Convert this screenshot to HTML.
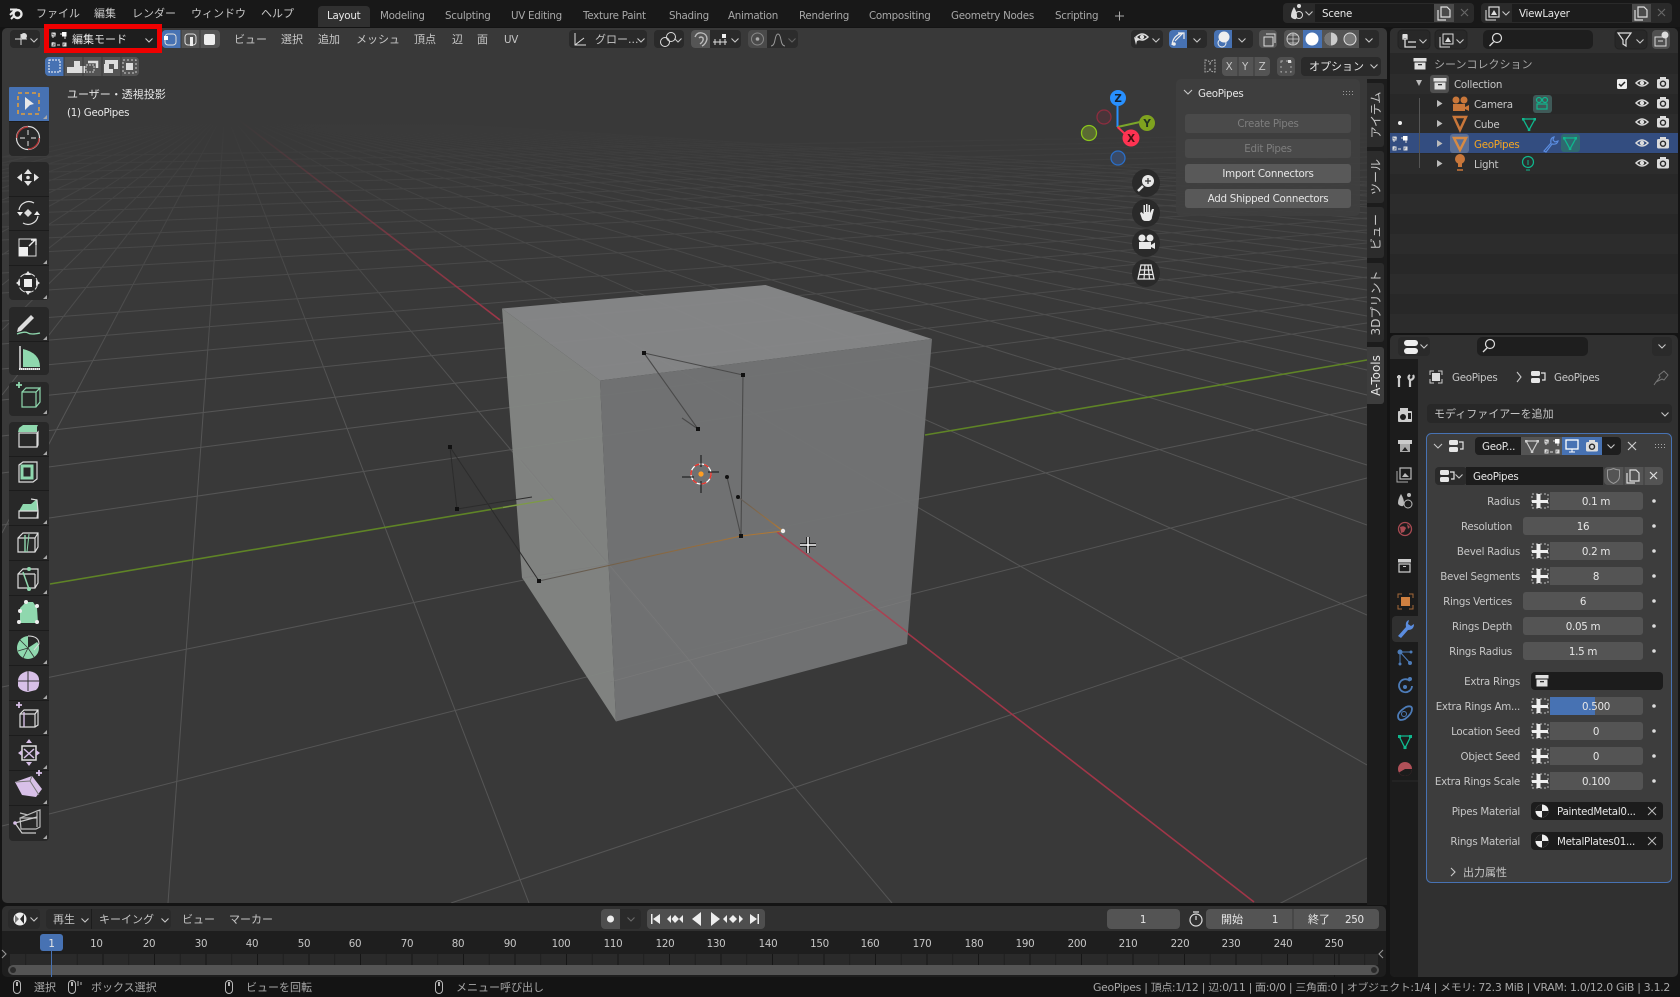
<!DOCTYPE html>
<html lang="ja"><head><meta charset="utf-8"><title>Blender</title>
<style>
html,body{margin:0;padding:0;background:#141414;width:1680px;height:997px;overflow:hidden}
svg{display:block}
text{font-family:"DejaVu Sans","Noto Sans CJK JP",sans-serif;font-size:10.3px;letter-spacing:-.28px;fill:#c6c6c6}
.w{fill:#e6e6e6}.d{fill:#a8a8a8}.m{text-anchor:middle}.e{text-anchor:end}
.j{font-size:11px;letter-spacing:0}.dis{fill:#7e7e7e}
.tb{font-size:12px;letter-spacing:0}
.ic{fill:none;stroke:#d6d6d6;stroke-width:1.3}
.chev{fill:none;stroke:#c8c8c8;stroke-width:1.1}
</style></head><body>
<svg width="1680" height="997" viewBox="0 0 1680 997" xmlns="http://www.w3.org/2000/svg">
<defs>
<linearGradient id="gf" gradientUnits="userSpaceOnUse" x1="0" y1="122" x2="0" y2="400"><stop offset="0" stop-color="#505050" stop-opacity="0"/><stop offset=".25" stop-color="#505050" stop-opacity=".45"/><stop offset="1" stop-color="#555555"/></linearGradient>
<linearGradient id="rf" gradientUnits="userSpaceOnUse" x1="239" y1="120" x2="500" y2="320"><stop offset="0" stop-color="#a03648" stop-opacity="0"/><stop offset="1" stop-color="#a03648"/></linearGradient>
<linearGradient id="or" gradientUnits="userSpaceOnUse" x1="539" y1="581" x2="783" y2="531"><stop offset="0" stop-color="#555"/><stop offset="1" stop-color="#b87a30"/></linearGradient>
<linearGradient id="or2" gradientUnits="userSpaceOnUse" x1="738" y1="497" x2="783" y2="531"><stop offset="0" stop-color="#5a5a5a"/><stop offset="1" stop-color="#b87a30"/></linearGradient>
<clipPath id="vp"><rect x="2" y="28" width="1365" height="875"/></clipPath>
<g id="chv"><path d="M-3.5-1.5L0 2L3.5-1.5" class="chev"/></g>
<g id="eye"><path d="M-6 0Q0-6 6 0Q0 6-6 0Z" fill="none" stroke="#dcdcdc" stroke-width="1.5"/><circle r="2.2" fill="#dcdcdc"/></g>
<g id="rc"><rect x="-6" y="-4" width="12" height="9.5" rx="1.5" fill="#dcdcdc"/><rect x="-3" y="-6" width="6" height="2" fill="#dcdcdc"/><circle cy=".7" r="3.2" fill="#2a2a2a"/><circle cy=".7" r="1.8" fill="#dcdcdc"/></g>
<g id="tg"><rect x="-8" y="-7" width="16" height="14" fill="none" stroke="#bbb" stroke-dasharray="2 2"/><rect x="-3.5" y="-7" width="4" height="14" fill="#eee"/><rect x="-8" y="-1" width="16" height="3" fill="#eee"/></g>
<g id="mod"><rect x="-7" y="-6" width="9" height="5" rx="1.5" fill="#e6e6e6"/><rect x="-7" y="1" width="9" height="5" rx="1.5" fill="#e6e6e6"/><path d="M3-4H7V3H4" fill="none" stroke="#e6e6e6" stroke-width="1.2"/></g>
<g id="tri"><path d="M-6-5H6L0 6Z" fill="none" stroke="#0fb88e" stroke-width="1.3"/><g fill="#0fb88e"><rect x="-7" y="-6" width="2.5" height="2.5"/><rect x="4.5" y="-6" width="2.5" height="2.5"/><rect x="-1.2" y="4.5" width="2.5" height="2.5"/></g></g>
<g id="triw"><path d="M-6-5H6L0 6Z" fill="none" stroke="#ccc" stroke-width="1.2"/><g fill="#ccc"><rect x="-7" y="-6" width="2.5" height="2.5"/><rect x="4.5" y="-6" width="2.5" height="2.5"/><rect x="-1.2" y="4.5" width="2.5" height="2.5"/></g></g>
<g id="mode"><rect x="-6" y="-5" width="12" height="11" fill="none" stroke="#ddd" stroke-dasharray="3 4"/><rect x="3" y="-7" width="4.5" height="4.5" fill="#fff"/><g fill="none" stroke="#ddd"><rect x="-7" y="-6" width="3" height="3"/><rect x="-7" y="4" width="3" height="3"/><rect x="4" y="4" width="3" height="3"/></g></g>
<g id="sph"><circle r="6.5" fill="#f0f0f0"/><path d="M0 0H-6.500A6.500 6.500 0 0 1 0-6.500ZM0 0H6.500A6.500 6.500 0 0 1 0 6.500Z" fill="#222"/></g>
<g id="coll"><rect x="-6.5" y="-6" width="13" height="3.5" fill="#e0e0e0"/><path d="M-5.500-1.500H5.500V5.500H-5.500Z" fill="#e0e0e0"/><rect x="-2" y="0" width="4" height="1.3" fill="#333"/></g>
<g id="mouse"><rect x="-3.5" y="-6.5" width="7" height="13" rx="3.5" fill="none" stroke="#b8b8b8"/><rect x="-1" y="-5" width="2" height="4" fill="#b8b8b8"/></g>
<pattern id="tk" patternUnits="userSpaceOnUse" width="51.500" height="12" x="51"><rect width="51.500" height="12" fill="#2a2a2a"/><rect x="0" width="1" height="12" fill="#161616"/><rect x="25.700" width="1" height="12" fill="#1f1f1f"/></pattern>
</defs>

<rect width="1680" height="997" fill="#141414"/>
<rect width="1680" height="27" fill="#181818"/>

<!-- viewport -->
<rect x="2" y="28" width="1385" height="875" rx="5" fill="#393939"/>
<g clip-path="url(#vp)">
<path fill="none" stroke="url(#gf)" d="M225 110L892 903M225 110L529 903M225 110L168 903M225 110L2 533M225 110L2 395M225 110L2 330M225 110L2 285M225 110L2 255M225 110L2 232M225 110L2 215M225 110L2 200M225 110L2 188M225 110L2 178M225 110L2 170M225 110L2 163M225 110L2 157M225 110L1367 765M225 110L1367 615M225 110L1367 525M225 110L1367 465M225 110L1367 425M225 110L1367 395M225 110L1367 370M225 110L1367 350M225 110L1367 332M225 110L1367 316M225 110L1367 302M225 110L1367 290M225 110L1367 278M225 110L1367 268M225 110L1367 258M225 110L1367 249M225 110L1367 241M225 110L1367 233M225 110L1367 226M225 110L1367 219M225 110L1367 213M225 110L1367 207M225 110L1367 201M225 110L1367 196M225 110L1367 191M225 110L1367 186M225 110L1367 182M2 687L1367 407M2 826L1367 478M451 903L1367 595M1279 904L1367 858M2 525L1367 323M2 473L1367 297M2 436L1367 277M2 400L1367 259M2 369L1367 243M2 344L1367 230M2 321L1367 218M2 293L1367 204M2 273L1367 194M2 254L1367 184M2 240L1367 177M2 227L1367 170M2 214L1367 163M2 202L1367 157M2 191L1367 152M2 181L1367 147M2 173L1367 142M2 165L1367 138M2 157L1367 134"/>
<path d="M239 120L500 320" stroke="url(#rf)" stroke-width="1.600"/>
<path d="M777 532L1254 902" stroke="#a03648" stroke-width="1.600"/>
<path d="M50 584L553 499M925 435L1367 360" stroke="#5f8426" stroke-width="1.600" fill="none"/>
<!-- cube -->
<g opacity=".96">
<path d="M502 308.500L765.500 285L932 339L600 380.500Z" fill="#878889"/>
<path d="M502 308.500L600 380.500L616 721.500L522 577.500Z" fill="#838683"/>
<path d="M600 380.500L932 339L907 644L616 721.500Z" fill="#737475"/>
</g>
<path d="M521 460L685 655L720 698M522 578L610 564M610 682L909 600" stroke="#7c7c7c" stroke-width=".8" fill="none" opacity=".7"/>
<path d="M777 532L907 632" stroke="#a84252" stroke-width="1.600"/>
<path d="M503 507.500L553 499" stroke="#7d9a45" stroke-width="1.300"/>
<!-- mesh -->
<path d="M644 353L743 375M644 353L698 429L682 418M743 375L741 536M727 477L741 536" fill="none" stroke="#4a4a4a" stroke-width="1.100"/>
<path d="M539 581L450 447L457 509L532 497" fill="none" stroke="#2c2c2c" stroke-width="1"/>
<path d="M539 581L741 536L783 531" stroke="url(#or)" stroke-width="1.100" fill="none"/>
<path d="M738 497L783 531" stroke="url(#or2)" stroke-width="1.100"/>
<g fill="#111"><rect x="642" y="351" width="4" height="4"/><rect x="741" y="373" width="4" height="4"/><rect x="696" y="427" width="4" height="4"/><circle cx="727" cy="477" r="2"/><circle cx="738" cy="497" r="2"/><rect x="739" y="534" width="4" height="4"/><rect x="537" y="579" width="4" height="4"/><rect x="448" y="445" width="4" height="4"/><rect x="455" y="507" width="4" height="4"/></g>
<circle cx="783" cy="531" r="2.200" fill="#eee"/>
<circle cx="701" cy="474" r="10" fill="none" stroke="#fff" stroke-width="1.300"/>
<circle cx="701" cy="474" r="10" fill="none" stroke="#e8342c" stroke-width="1.400" stroke-dasharray="5 5"/>
<path d="M701 455V467M701 481V493M682 477H694M708 472H719" stroke="#111"/>
<circle cx="701" cy="474" r="2.600" fill="#ff9e22"/>
<path d="M808 537V553M800 545H816" stroke="#111" stroke-width="3.500"/>
<path d="M808 537V553M800 545H816" stroke="#fff" stroke-width="1.500"/>
</g>

<text x="67" y="98" class="w j">ユーザー・透視投影</text>
<text x="67" y="116" class="w">(1) GeoPipes</text>

<!-- N tabs column -->
<rect x="1367" y="79" width="20" height="826" fill="#1c1c1c"/>
<g fill="#2c2c2c"><path d="M1367 83h14a3 3 0 0 1 3 3v58a3 3 0 0 1-3 3h-14z"/><path d="M1367 151h14a3 3 0 0 1 3 3v46a3 3 0 0 1-3 3h-14z"/><path d="M1367 207h14a3 3 0 0 1 3 3v45a3 3 0 0 1-3 3h-14z"/><path d="M1367 263h14a3 3 0 0 1 3 3v73a3 3 0 0 1-3 3h-14z"/><path d="M1367 347h14a3 3 0 0 1 3 3v51a3 3 0 0 1-3 3h-14z" fill="#3d3d3d"/></g>
<text class="m tb" transform="translate(1380 115) rotate(-90)">アイテム</text>
<text class="m tb" transform="translate(1380 177) rotate(-90)">ツール</text>
<text class="m tb" transform="translate(1380 232) rotate(-90)">ビュー</text>
<text class="m tb" transform="translate(1380 303) rotate(-90)">3Dプリント</text>
<text class="m w tb" transform="translate(1380 375.500) rotate(-90)">A-Tools</text>

<!-- N panel -->
<rect x="1176" y="79" width="184" height="137" rx="5" fill="#3f3f3f" fill-opacity=".92"/>
<path d="M1184 90l4 4l4-4" class="chev"/>
<text x="1198" y="97" class="w">GeoPipes</text>
<g fill="#999"><rect x="1343" y="91" width="1" height="1"/><rect x="1346" y="91" width="1" height="1"/><rect x="1349" y="91" width="1" height="1"/><rect x="1352" y="91" width="1" height="1"/><rect x="1343" y="94" width="1" height="1"/><rect x="1346" y="94" width="1" height="1"/><rect x="1349" y="94" width="1" height="1"/><rect x="1352" y="94" width="1" height="1"/></g>
<rect x="1185" y="114" width="166" height="19" rx="3" fill="#4a4a4a"/><text x="1268" y="127" class="m dis">Create Pipes</text>
<rect x="1185" y="139" width="166" height="19" rx="3" fill="#4a4a4a"/><text x="1268" y="152" class="m dis">Edit Pipes</text>
<rect x="1185" y="164" width="166" height="19" rx="3" fill="#595959"/><text x="1268" y="177" class="m w">Import Connectors</text>
<rect x="1185" y="189" width="166" height="19" rx="3" fill="#595959"/><text x="1268" y="202" class="m w">Add Shipped Connectors</text>

<!-- gizmo -->
<path d="M1117.500 127V106" stroke="#2890ff" stroke-width="2"/><path d="M1117.500 127L1140 122" stroke="#7ba62a" stroke-width="2"/><path d="M1117.500 127L1125 134" stroke="#ff3352" stroke-width="2"/>
<circle cx="1104" cy="117" r="7" fill="#4a3439" stroke="#8d2d3f" stroke-width="1.300"/>
<circle cx="1089" cy="133" r="7.500" fill="#5a6a33" stroke="#8bc61c" stroke-width="1.300"/>
<circle cx="1118" cy="158" r="7" fill="#3a4a66" stroke="#2a6fc9" stroke-width="1.300"/>
<circle cx="1118" cy="98" r="8" fill="#2890ff"/><text x="1118" y="102" class="m" style="fill:#123;font-weight:bold">Z</text>
<circle cx="1147" cy="123" r="8" fill="#7fa31f"/><text x="1147" y="127" class="m" style="fill:#232;font-weight:bold">Y</text>
<circle cx="1131" cy="138" r="8.500" fill="#ff3352"/><text x="1131" y="142" class="m" style="fill:#411;font-weight:bold">X</text>
<g fill="#2a2a2a"><circle cx="1146" cy="183" r="14"/><circle cx="1146" cy="213" r="14"/><circle cx="1146" cy="243" r="14"/><circle cx="1146" cy="273" r="14"/></g>
<circle cx="1148" cy="181" r="6" fill="#e8e8e8"/><path d="M1145 181h6M1148 178v6" stroke="#333" stroke-width="1.200"/><path d="M1143 186l-5 5" stroke="#e8e8e8" stroke-width="2.500"/>
<path d="M1140 213l2 6q1 2 4 2h3q3-1 3-4l2-8h-2l-2 4v-8h-1.500v7h-1v-8h-1.500v8h-1v-7h-1.500v9l-2-2z" fill="#e8e8e8"/>
<circle cx="1142" cy="238" r="3.500" fill="#e8e8e8"/><circle cx="1150" cy="238" r="3.500" fill="#e8e8e8"/><rect x="1139" y="242" width="12" height="7" fill="#e8e8e8"/><path d="M1151 245l4-2.500v6.500l-4-2z" fill="#e8e8e8"/>
<path d="M1141 265h10l3 14h-16zM1145 265l-1 14M1148 265l1.500 14M1139.500 270h13M1138.500 274.500h15" fill="none" stroke="#e8e8e8" stroke-width="1.200"/>

<!-- top bar -->
<g transform="translate(16 14)"><circle cx="1.500" cy="0" r="4" fill="none" stroke="#e8e8e8" stroke-width="2.400"/><path d="M-6-4.500L1-4.500M-6 1L-2-3M-5 5L-2 2" stroke="#e8e8e8" stroke-width="2"/></g>
<text x="36" y="17" class="j">ファイル</text><text x="94" y="17" class="j">編集</text><text x="132" y="17" class="j">レンダー</text><text x="191" y="17" class="j">ウィンドウ</text><text x="261" y="17" class="j">ヘルプ</text>
<path d="M318 27V10a4 4 0 0 1 4-4h44a4 4 0 0 1 4 4v17z" fill="#303030"/>
<text x="327" y="19" class="w">Layout</text>
<text x="380" y="19" class="d">Modeling</text><text x="445" y="19" class="d">Sculpting</text><text x="511" y="19" class="d">UV Editing</text><text x="583" y="19" class="d">Texture Paint</text><text x="669" y="19" class="d">Shading</text><text x="728" y="19" class="d">Animation</text><text x="799" y="19" class="d">Rendering</text><text x="869" y="19" class="d">Compositing</text><text x="951" y="19" class="d">Geometry Nodes</text><text x="1055" y="19" class="d">Scripting</text>
<path d="M1115 16h9M1119.500 11.500v9" stroke="#aaa"/>

<g transform="translate(0 -1)">
<rect x="1283" y="4" width="191" height="20" rx="4" fill="#2a2a2a"/>
<rect x="1315" y="5" width="119" height="18" fill="#1c1c1c"/><rect x="1434" y="5" width="20" height="18" fill="#4a4a4a"/>
<path d="M1291 17q0-4 3-9q3 5 3 9t-3 3t-3-3z" fill="#ddd"/><circle cx="1299" cy="7" r="2" fill="#ddd"/><circle cx="1299" cy="16" r="3.500" fill="none" stroke="#ddd"/><use href="#chv" x="1309" y="14"/>
<text x="1322" y="18" class="w">Scene</text>
<path d="M1441 8h6l3 3v7h-9zM1438 11v10h8" fill="none" stroke="#ddd" stroke-width="1.200"/>
<path d="M1461 10l7 7M1468 10l-7 7" stroke="#666" stroke-width="1.200"/>
<rect x="1481" y="4" width="191" height="20" rx="4" fill="#2a2a2a"/>
<rect x="1512" y="5" width="120" height="18" fill="#1c1c1c"/><rect x="1632" y="5" width="19" height="18" fill="#4a4a4a"/>
<rect x="1489" y="8" width="10" height="10" fill="none" stroke="#ddd" stroke-width="1.200"/><path d="M1491 16l3-5l3 5z" fill="#ddd"/><path d="M1486 11v10h10" fill="none" stroke="#ddd"/><use href="#chv" x="1506" y="14"/>
<text x="1519" y="18" class="w">ViewLayer</text>
<path d="M1638 8h6l3 3v7h-9zM1635 11v10h8" fill="none" stroke="#ddd" stroke-width="1.200"/>
<path d="M1658 10l7 7M1665 10l-7 7" stroke="#666" stroke-width="1.200"/>
</g>

<!-- viewport header left -->
<rect x="10" y="30" width="30" height="18" rx="4" fill="#2a2a2a"/>
<path d="M15 39h12M21 34v11" stroke="#ddd"/><circle cx="24" cy="36" r="3" fill="#ddd"/><use href="#chv" x="34" y="40"/>
<rect x="46.500" y="26.500" width="113" height="24" fill="#1e1e1e" stroke="#f00000" stroke-width="5"/>
<rect x="49" y="30" width="107" height="18" rx="2" fill="#1e1e1e"/>
<use href="#mode" x="59" y="39"/><text x="72" y="43" class="w j">編集モード</text><use href="#chv" x="149" y="40"/>
<rect x="162" y="30" width="58" height="18" rx="4" fill="#545454"/><path d="M166 30h15v18h-15a4 4 0 0 1-4-4v-10a4 4 0 0 1 4-4z" fill="#4772b3"/>
<rect x="165" y="34" width="11" height="11" rx="3" fill="none" stroke="#ddd"/><rect x="164" y="36" width="4" height="4" fill="#fff"/>
<rect x="185" y="34" width="11" height="11" rx="3" fill="none" stroke="#ddd"/><rect x="190" y="37" width="3" height="9" fill="#eee"/>
<rect x="204" y="34" width="11" height="11" rx="2" fill="#eee"/>
<path d="M181 30v18M200 30v18" stroke="#3a3a3a"/>
<text x="234" y="43" class="j">ビュー</text><text x="281" y="43" class="j">選択</text><text x="318" y="43" class="j">追加</text><text x="356" y="43" class="j">メッシュ</text><text x="414" y="43" class="j">頂点</text><text x="452" y="43" class="j">辺</text><text x="477" y="43" class="j">面</text><text x="504" y="43">UV</text>
<rect x="45" y="57" width="94" height="19" rx="4" fill="#545454"/><path d="M49 57h15v19h-15a4 4 0 0 1-4-4v-11a4 4 0 0 1 4-4z" fill="#4772b3"/>
<rect x="49" y="60" width="11" height="12" fill="none" stroke="#fff" stroke-dasharray="2 1"/>
<path d="M74 61h6v5h5v7H67v-6h7z" fill="#ddd"/>
<path d="M88 62h9v6" fill="none" stroke="#ddd" stroke-width="2.500"/><rect x="86" y="65" width="8" height="7" fill="none" stroke="#ccc" stroke-dasharray="2 1"/>
<path d="M105 60h13v9h-5v4h-9v-9h1z" fill="#ddd"/><rect x="109" y="64" width="5" height="5" fill="#555"/>
<rect x="123" y="60" width="13" height="13" fill="none" stroke="#ccc" stroke-dasharray="2 2"/><rect x="126" y="63" width="7" height="7" fill="#ddd"/>
<path d="M64 57v19M83 57v19M102 57v19M121 57v19" stroke="#3a3a3a"/>

<!-- header middle -->
<rect x="569" y="30" width="78" height="18" rx="4" fill="#2a2a2a"/>
<path d="M575 33v12h11M575 45l9-7" fill="none" stroke="#ddd"/><text x="595" y="43" class="j">グロー...</text><use href="#chv" x="641" y="40"/>
<rect x="654" y="30" width="30" height="18" rx="4" fill="#2a2a2a"/>
<circle cx="665" cy="42" r="4.500" fill="none" stroke="#ddd"/><circle cx="671" cy="37" r="4.500" fill="none" stroke="#ddd"/><use href="#chv" x="678" y="40"/>
<rect x="691" y="30" width="50" height="18" rx="4" fill="#2a2a2a"/><path d="M695 30h15v18h-15a4 4 0 0 1-4-4v-10a4 4 0 0 1 4-4z" fill="#555"/>
<path d="M695 37q2-5 7-4t5 6q-1 5-5 7M699 38q2-2 4 0q1 3-3 6" fill="none" stroke="#bbb" stroke-width="1.400"/>
<path d="M713 42h14M715 39v6M720 39v6M725 39v6" stroke="#ddd"/><rect x="722" y="34" width="4" height="4" fill="#eee"/><use href="#chv" x="735" y="40"/>
<rect x="748" y="30" width="50" height="18" rx="4" fill="#2c2c2c"/><path d="M752 30h15v18h-15a4 4 0 0 1-4-4v-10a4 4 0 0 1 4-4z" fill="#4a4a4a"/>
<circle cx="757.500" cy="39" r="6" fill="none" stroke="#888"/><circle cx="757.500" cy="39" r="1.800" fill="#aaa"/>
<path d="M771 46q3 0 4-6t3-6t3 6t4 6" fill="none" stroke="#999"/><use href="#chv" x="792" y="40" opacity=".35"/>

<!-- header right -->
<rect x="1131" y="30" width="32" height="18" rx="4" fill="#2a2a2a"/><use href="#eye" x="1142" y="37"/><path d="M1134 37l6 3l-3 1l-1 4z" fill="#ddd"/><use href="#chv" x="1156" y="40"/>
<rect x="1169" y="30" width="38" height="18" rx="4" fill="#2a2a2a"/><path d="M1173 30h14v18h-14a4 4 0 0 1-4-4v-10a4 4 0 0 1 4-4z" fill="#4772b3"/><path d="M1172 45q1-10 11-12M1178 33h6v6M1175 41l8-8" fill="none" stroke="#eee" stroke-width="1.200"/><circle cx="1174" cy="44" r="1.800" fill="#eee"/><use href="#chv" x="1197" y="40"/>
<rect x="1214" y="30" width="39" height="18" rx="4" fill="#2a2a2a"/><path d="M1218 30h14v18h-14a4 4 0 0 1-4-4v-10a4 4 0 0 1 4-4z" fill="#4772b3"/><circle cx="1224" cy="37" r="5.500" fill="#eee"/><circle cx="1222" cy="43" r="4" fill="none" stroke="#eee"/><use href="#chv" x="1242" y="40"/>
<rect x="1259" y="30" width="18" height="18" rx="4" fill="#545454"/><rect x="1264" y="37" width="9" height="9" fill="none" stroke="#ddd"/><path d="M1266 34h9v9" fill="none" stroke="#ddd"/>
<rect x="1284" y="30" width="95" height="18" rx="4" fill="#2a2a2a"/><path d="M1288 30h15v18h-15a4 4 0 0 1-4-4v-10a4 4 0 0 1 4-4z" fill="#545454"/><rect x="1322" y="30" width="37" height="18" fill="#545454"/><rect x="1303" y="30" width="19" height="18" fill="#4772b3"/>
<circle cx="1293" cy="39" r="6" fill="none" stroke="#ccc"/><path d="M1287 39h12M1293 33v12M1289 35h8M1289 43h8" stroke="#ccc" stroke-width=".8"/>
<circle cx="1312" cy="39" r="6.500" fill="#fff"/>
<circle cx="1331" cy="39" r="6.500" fill="#ccc"/><path d="M1331 32.500a6.500 6.500 0 0 0 0 13z" fill="#777"/>
<circle cx="1350" cy="39" r="6" fill="#777" stroke="#ddd"/>
<use href="#chv" x="1369" y="40"/>
<path d="M1205 60q5 0 5 5q0-5 5-5v12q-5 0-5-4q0 4-5 4z" fill="none" stroke="#aaa" stroke-dasharray="2 1"/>
<rect x="1222" y="57" width="48" height="19" rx="4" fill="#545454"/><path d="M1238 57v19M1254 57v19" stroke="#3a3a3a"/>
<text x="1229" y="70" class="m">X</text><text x="1245" y="70" class="m">Y</text><text x="1262" y="70" class="m">Z</text>
<rect x="1277" y="57" width="18" height="19" rx="4" fill="#505050"/><rect x="1281" y="61" width="10" height="11" fill="none" stroke="#aaa" stroke-dasharray="2 3"/><rect x="1288" y="60" width="3" height="3" fill="#ddd"/>
<rect x="1301" y="57" width="80" height="19" rx="4" fill="#2a2a2a"/><text x="1309" y="70" class="w j">オプション</text><use href="#chv" x="1374" y="66"/>

<!-- toolbar -->
<g fill="#282828">
<rect x="9" y="87" width="40" height="69" rx="4"/><rect x="9" y="162" width="40" height="138" rx="4"/><rect x="9" y="307" width="40" height="68" rx="4"/><rect x="9" y="382" width="40" height="34" rx="4"/><rect x="9" y="422" width="40" height="419" rx="4"/>
</g>
<path d="M9 88a1 1 0 0 1 1-1h38a1 1 0 0 1 1 1v33H9z" fill="#4772b3"/>
<path fill="none" stroke="#1c1c1c" d="M9 121.500h40M9 196.500h40M9 230.500h40M9 265.500h40M9 341.500h40M9 456.500h40M9 490.500h40M9 525.500h40M9 560.500h40M9 595.500h40M9 630.500h40M9 665.500h40M9 700.500h40M9 735.500h40M9 770.500h40M9 805.500h40"/>
<rect x="18" y="93" width="21" height="21" fill="none" stroke="#ffa726" stroke-width="1.300" stroke-dasharray="4 3"/><path d="M25 97l9 7l-4 1l-5 5z" fill="#e8e8e8"/>
<circle cx="28" cy="138" r="11.500" fill="none" stroke="#ddd" stroke-width="1.200"/><path d="M17 138a11 11 0 0 1 11-11" fill="none" stroke="#a33" stroke-width="1.400"/><path d="M39 138a11 11 0 0 1-11 11" fill="none" stroke="#a33" stroke-width="1.400"/><path d="M28 130v5M28 141v5M20 138h5M31 138h5" stroke="#aaa" stroke-width="1.400"/>
<g fill="#e4e4e4"><path d="M28 169l-4 5h8zM28 186l-4-5h8zM17 177.500l5-4v8zM39 177.500l-5-4v8z"/><circle cx="28" cy="177.500" r="1.800"/></g>
<g fill="none" stroke="#ddd" stroke-width="1.200"><path d="M19 210a10 10 0 0 1 15-7M38 216a10 10 0 0 1-15 7"/></g><path d="M28 209l4 4l-4 4l-4-4z" fill="#ddd"/><path d="M17 212h6l-3 4zM34 215h6l-3-4z" fill="#eee"/>
<rect x="19" y="239" width="17" height="17" fill="none" stroke="#ddd"/><rect x="19" y="247" width="9" height="9" fill="#eee"/><path d="M29 246l6-6M31 240h5v5" fill="none" stroke="#eee" stroke-width="1.400"/>
<circle cx="28" cy="283" r="9.500" fill="none" stroke="#ddd" stroke-dasharray="7 2"/><rect x="24" y="279" width="8" height="8" fill="#eee"/><g fill="#e4e4e4"><path d="M28 271l-3 4h6zM28 295l-3-4h6zM16 283l4-3v6zM40 283l-4-3v6z"/></g>
<path d="M18 328l13-13l3 3l-13 13l-4 1z" fill="#ddd"/><path d="M17 334q8-3 11-1t12 0" fill="none" stroke="#8fd8ae" stroke-width="1.300"/>
<path d="M20 346v23h20" fill="none" stroke="#ddd" stroke-width="1.500"/><path d="M23 349v18h17q0-14-17-18z" fill="#8fd8ae"/><path d="M19 369h22" stroke="#eee" stroke-width="2" stroke-dasharray="1 1"/>
<path d="M22 392h14l4-4v14l-4 5H22zM22 392l4-4h14M36 392v15" fill="none" stroke="#8fd8ae" stroke-width="1.200"/><path d="M16 385h6M19 382v6" stroke="#8fd8ae" stroke-width="1.800"/>
<path d="M19 428l4-3h15l-1 2v5H18z" fill="#8fd8ae"/><path d="M19 433h18v14H19zM37 433l1-1v13l-1 2" fill="none" stroke="#ddd" stroke-width="1.200"/>
<path d="M19 465l4-3h14v17l-4 3H19z" fill="none" stroke="#ddd" stroke-width="1.200"/><rect x="22" y="466" width="10" height="12" fill="none" stroke="#8fd8ae" stroke-width="3"/>
<path d="M19 511l4-7h8l6-5l1 12z" fill="#8fd8ae"/><path d="M19 511h19v7H19zM38 511l-1 7M31 499l6 1l1 11" fill="none" stroke="#ddd" stroke-width="1.200"/>
<path d="M18 538l5-5h15v14l-3 5H18zM35 538v14M18 538h17M38 533l-3 5" fill="none" stroke="#ddd" stroke-width="1.200"/><path d="M25 535v17" stroke="#8fd8ae" stroke-width="1.400"/><path d="M29 534l-2 18" stroke="#8fd8ae" stroke-width="1"/>
<path d="M18 574l5-5h15v14l-3 5H18zM35 574v14M18 574h17" fill="none" stroke="#ddd" stroke-width="1.200"/><path d="M23 572l6 17" stroke="#8fd8ae" stroke-width="1.500"/><circle cx="29" cy="569" r="2" fill="#8fd8ae"/><circle cx="29" cy="589" r="2" fill="#8fd8ae"/>
<path d="M20 623v-15l6-6h7l4 6l1 15z" fill="#8fd8ae"/><g fill="#eee"><circle cx="19" cy="622" r="2"/><circle cx="37" cy="622" r="2"/><circle cx="37" cy="606" r="2"/><circle cx="26" cy="602" r="2"/><circle cx="20" cy="611" r="2"/></g>
<path d="M28 648v-12a12 12 0 0 0-11 12a11 11 0 0 0 22 0a8 8 0 0 0-2-6z" fill="#8fd8ae"/><path d="M28 636q11 0 11 8l-5 6" fill="none" stroke="#ddd"/><path d="M28 648l-8-8M28 648l-10 3M28 648l-5 10M28 648l6 9" stroke="#333" stroke-width=".8"/>
<path d="M18 680q1-7 10-9q10 1 11 8q1 8-3 11l-8 2q-8-1-10-6z" fill="#d8c0e8"/><path d="M17 681h22M28 671v20" stroke="#333" stroke-width="1"/>
<path d="M20 714l4-4h14v15l-3 2H20zM35 714v13M20 714h15M38 710l-3 4" fill="none" stroke="#ddd" stroke-width="1.200"/><path d="M24 712v15" stroke="#d8c0e8" stroke-width="1.400"/><path d="M16 705h6M19 702v6" stroke="#d8c0e8" stroke-width="1.800"/>
<rect x="22" y="746" width="14" height="14" fill="none" stroke="#ddd" stroke-width="1.500"/><path d="M24 749l10 9M34 749l-10 9" stroke="#d8c0e8" stroke-width="1.500"/><g fill="#d8c0e8"><path d="M29 739l-3 4h6zM29 766l-3-4h6zM18 753l4-3v6zM40 753l-4-3v6z"/></g>
<path d="M15 782l17-6l10 13l-6 8l-14-2z" fill="#d8c0e8"/><path d="M32 776l-2 5l9 14M30 781l-14 1" fill="none" stroke="#777"/><path d="M36 773h6M39 770v6" stroke="#d8c0e8" stroke-width="1.800"/>
<path d="M20 815l17-7l3-1v17l-4 2H21zM37 809v15M20 815h17M28 812l-8-2" fill="none" stroke="#bbb" stroke-width="1.200" transform="translate(0 3)"/><path d="M15 823l22-6M15 823l7 10h14" fill="none" stroke="#ccc" stroke-width="1.200"/><circle cx="15" cy="823" r="1.800" fill="#d8c0e8"/>
<g fill="#a8a8a8"><path d="M47 119v-4l-4 4zM47 264v-4l-4 4zM47 299v-4l-4 4zM47 340v-4l-4 4zM47 414v-4l-4 4zM47 455v-4l-4 4zM47 524v-4l-4 4zM47 559v-4l-4 4zM47 594v-4l-4 4zM47 664v-4l-4 4zM47 699v-4l-4 4zM47 734v-4l-4 4zM47 769v-4l-4 4zM47 804v-4l-4 4zM47 839v-4l-4 4z"/></g>

<!-- outliner -->
<rect x="1390" y="28" width="288" height="305" rx="5" fill="#282828"/>
<path d="M1390 53V33a5 5 0 0 1 5-5h278a5 5 0 0 1 5 5v20z" fill="#303030"/>
<g fill="#2c2c2c"><rect x="1390" y="74" width="288" height="20"/><rect x="1390" y="114" width="288" height="20"/><rect x="1390" y="154" width="288" height="20"/><rect x="1390" y="194" width="288" height="20"/><rect x="1390" y="234" width="288" height="20"/><rect x="1390" y="274" width="288" height="20"/><rect x="1390" y="314" width="288" height="19"/></g>
<rect x="1390" y="133" width="288" height="20" fill="#334d80"/>
<rect x="1398" y="30" width="32" height="19" rx="4" fill="#282828" stroke="#222"/><path d="M1403 35h4v4h-4zM1405 39v8h3M1408 42h8M1408 47h8" fill="none" stroke="#ddd" stroke-width="1.300"/><rect x="1403" y="34" width="4" height="4" fill="#ddd"/><use href="#chv" x="1423" y="41"/>
<rect x="1435" y="30" width="32" height="19" rx="4" fill="#282828" stroke="#222"/><rect x="1443" y="34" width="10" height="10" fill="none" stroke="#ddd"/><path d="M1445 42l3-5l3 5z" fill="#ddd"/><path d="M1440 37v10h10" fill="none" stroke="#ddd"/><use href="#chv" x="1460" y="41"/>
<rect x="1483" y="30" width="110" height="19" rx="5" fill="#1e1e1e"/><circle cx="1497" cy="38" r="4.500" fill="none" stroke="#ddd" stroke-width="1.200"/><path d="M1493.500 42l-4 4" stroke="#ddd" stroke-width="1.300"/>
<rect x="1615" y="30" width="32" height="19" rx="4" fill="#282828" stroke="#222"/><path d="M1618 33h13l-5 7v6l-3-2v-4z" fill="none" stroke="#ddd" stroke-width="1.200"/><use href="#chv" x="1640" y="41"/>
<rect x="1652" y="30" width="18" height="19" rx="4" fill="#505050"/><path d="M1655 37h11v9h-11zM1658 41h5" fill="none" stroke="#ddd"/><circle cx="1665" cy="35" r="3.500" fill="#ddd"/>

<use href="#coll" x="1420" y="64"/><text x="1434" y="68" class="d j">シーンコレクション</text>
<path d="M1416 80h6l-3 6z" fill="#bbb"/><rect x="1430" y="75" width="19" height="18" rx="3" fill="#505050"/><use href="#coll" x="1440" y="84"/><text x="1454" y="88">Collection</text>
<rect x="1617" y="79" width="10" height="10" rx="1.500" fill="#eee"/><path d="M1619 84l2 2l4-4" stroke="#222" stroke-width="1.500" fill="none"/>
<use href="#eye" x="1642" y="83"/><use href="#rc" x="1663" y="83"/>
<path d="M1419.500 98V168" stroke="#555"/>
<g fill="#bbb"><path d="M1437 100v7l5.500-3.500zM1437 120v7l5.500-3.500zM1437 140v7l5.500-3.500zM1437 160v7l5.500-3.500z"/></g>
<g fill="#c9773a"><circle cx="1456" cy="100" r="3.500"/><circle cx="1464" cy="100" r="3.500"/><rect x="1453" y="104" width="12" height="7"/><path d="M1465 107l4-2v6l-4-2z"/></g>
<text x="1474" y="108">Camera</text>
<rect x="1533" y="95" width="19" height="18" rx="3" fill="#3f5a58"/><g fill="none" stroke="#0fb88e" stroke-width="1.200"><circle cx="1539" cy="100" r="2.500"/><circle cx="1545" cy="100" r="2.500"/><rect x="1537" y="104" width="10" height="5"/></g>
<use href="#eye" x="1642" y="103"/><use href="#rc" x="1663" y="103"/>
<circle cx="1400" cy="123" r="2" fill="#eee"/>
<path d="M1454 117h12l-6 13z" fill="none" stroke="#c9773a" stroke-width="2.500"/><text x="1474" y="128">Cube</text>
<use href="#tri" x="1529" y="124"/>
<use href="#eye" x="1642" y="122"/><use href="#rc" x="1663" y="122"/>
<use href="#mode" x="1400" y="143"/>
<rect x="1450" y="134" width="19" height="19" rx="3" fill="#5a6f96"/>
<path d="M1454 138h12l-6 12z" fill="none" stroke="#d68a44" stroke-width="2.500"/><text x="1474" y="148" style="fill:#f5a623">GeoPipes</text>
<path d="M1544 151l7-8q-1-5 3-6l-1 3l2 2l3-1q-1 4-6 3l-6 8z" fill="none" stroke="#5b8de0" stroke-width="1.200"/>
<rect x="1561" y="134" width="19" height="18" rx="3" fill="#2f6a70"/><use href="#tri" x="1570" y="143"/>
<use href="#eye" x="1642" y="143"/><use href="#rc" x="1663" y="143"/>
<circle cx="1460" cy="159" r="5" fill="#c9773a"/><rect x="1458" y="163" width="4" height="4" fill="#c9773a"/><path d="M1457 170h6" stroke="#c9773a" stroke-width="1.500"/><text x="1474" y="168">Light</text>
<circle cx="1528" cy="162" r="5.500" fill="none" stroke="#0fb88e" stroke-width="1.200"/><path d="M1528 160v5M1526 170h4" stroke="#0fb88e"/>
<use href="#eye" x="1642" y="163"/><use href="#rc" x="1663" y="163"/>

<!-- properties -->
<rect x="1390" y="335" width="288" height="642" rx="5" fill="#303030"/>
<path d="M1390 359H1418V977H1395a5 5 0 0 1-5-5z" fill="#1c1c1c"/>
<rect x="1398" y="337" width="32" height="19" rx="4" fill="#2a2a2a"/><rect x="1404" y="340" width="14" height="6" rx="3" fill="#eee"/><rect x="1404" y="348" width="14" height="6" rx="3" fill="#eee"/><use href="#chv" x="1424" y="346"/>
<rect x="1477" y="337" width="111" height="19" rx="5" fill="#1e1e1e"/><circle cx="1490" cy="344" r="4.500" fill="none" stroke="#ddd" stroke-width="1.200"/><path d="M1487 348l-4 4" stroke="#ddd" stroke-width="1.300"/>
<rect x="1652" y="337" width="20" height="19" rx="4" fill="#2a2a2a"/><use href="#chv" x="1662" y="346"/>
<path d="M1418 616h-22a4 4 0 0 0-4 4v18a4 4 0 0 0 4 4h22z" fill="#303030"/>
<path d="M1399 375v12M1401 377h-4M1410 375q-3 2 0 5v7M1413 375q2 3-2 5" fill="none" stroke="#ccc" stroke-width="2.200"/>
<rect x="1398" y="411" width="14" height="11" rx="1" fill="#ccc"/><rect x="1400" y="408" width="8" height="3" fill="#ccc"/><circle cx="1403" cy="417" r="3" fill="#1c1c1c"/><rect x="1408" y="413" width="3" height="6" fill="#1c1c1c"/>
<path d="M1398 440h14v4h-14z" fill="#ccc"/><path d="M1400 444h10v8h-10z" fill="#aaa"/><path d="M1402 451l3-4l3 4z" fill="#222"/>
<rect x="1400" y="468" width="11" height="11" fill="none" stroke="#bbb" stroke-width="1.200"/><path d="M1402 477l3-4l4 4z" fill="#bbb"/><path d="M1397 471v11h11" fill="none" stroke="#aaa"/>
<path d="M1398 503q0-4 3-9q3 5 3 9t-3 3t-3-3z" fill="#bbb"/><circle cx="1409" cy="495" r="2" fill="#bbb"/><circle cx="1408" cy="504" r="4" fill="none" stroke="#bbb"/>
<circle cx="1405" cy="529" r="6.500" fill="#1c1c1c" stroke="#a84a52" stroke-width="1.300"/><path d="M1400 527q4-2 6 1l-2 4l-3 1zM1407 524l3 3l-2 2z" fill="#a84a52"/>
<rect x="1398" y="559" width="13" height="3.500" fill="#ccc"/><path d="M1399 564h11v8h-11z" fill="none" stroke="#ccc" stroke-width="1.200"/><rect x="1403" y="566" width="3" height="1" fill="#ccc"/>
<rect x="1401" y="597" width="9" height="9" fill="#d08040"/><path d="M1398 598v-4h4M1409 594h4v4M1413 605v4h-4M1402 609h-4v-4" fill="none" stroke="#a56838"/>
<path d="M1398 636l8-9q-1-6 3-7l-1 4l3 2l3-2q0 6-6 6l-7 8z" fill="#5b8de0"/>
<g fill="#4d7cb8"><circle cx="1400" cy="652" r="2.500"/><circle cx="1411" cy="652" r="1.500"/><circle cx="1410" cy="663" r="2"/><circle cx="1400" cy="664" r="1.500"/></g><path d="M1400 652l10 11M1400 652v12M1400 652h11" stroke="#4d7cb8"/>
<path d="M1410 681a6.500 6.500 0 1 0 2 5" fill="none" stroke="#4d7cb8" stroke-width="1.800"/><circle cx="1405" cy="687" r="2" fill="#4d7cb8"/><circle cx="1410" cy="679" r="2" fill="#4d7cb8"/>
<path d="M1398 716q0-4 8-9q6-2 6 2q0 5-7 10q-7 3-7-3z" fill="none" stroke="#4d7cb8" stroke-width="1.800"/><circle cx="1404" cy="714" r="2.500" fill="none" stroke="#4d7cb8"/>
<path d="M1399 736h12l-6 12z" fill="none" stroke="#0fb88e" stroke-width="1.300"/><g fill="#0fb88e"><rect x="1398" y="735" width="3" height="3"/><rect x="1409" y="735" width="3" height="3"/><rect x="1403.500" y="746" width="3" height="3"/></g>
<circle cx="1405" cy="769" r="7" fill="#b05058"/><path d="M1405 769h7a7 7 0 0 1-7 7a7 7 0 0 1-6-3.500z" fill="#1c1c1c"/>
<path d="M1392 781h26" stroke="#2a2a2a"/>
<rect x="1432" y="373" width="8" height="8" fill="#ddd"/><path d="M1430 375v-4h4M1438 371h4v4M1442 379v4h-4M1434 383h-4v-4" fill="none" stroke="#ccc"/>
<text x="1452" y="381">GeoPipes</text><path d="M1517 372l4 5l-4 5" class="chev"/>
<use href="#mod" x="1538" y="377"/><text x="1554" y="381">GeoPipes</text>
<path d="M1656 382l4-5l-1-2l5-4l4 4l-4 5l-2-1zM1656 382l-2 3" fill="none" stroke="#777"/>
<rect x="1427" y="404" width="245" height="19" rx="4" fill="#282828"/><text x="1434" y="417.500" class="j">モディファイアーを追加</text><use href="#chv" x="1665" y="414"/>
<rect x="1426.500" y="433.500" width="245" height="449" rx="5" fill="#3d3d3d" stroke="#4772b3"/>
<path d="M1434 444l4 4l4-4" class="chev"/><use href="#mod" x="1456" y="446"/>
<rect x="1475" y="437" width="146" height="18" rx="4" fill="#1e1e1e"/><rect x="1521" y="437" width="41" height="18" fill="#545454"/><rect x="1562" y="437" width="40" height="18" fill="#4772b3"/>
<text x="1482" y="450" class="w">GeoP...</text>
<use href="#triw" x="1532" y="446"/>
<use href="#mode" x="1552" y="446"/>
<rect x="1566" y="440" width="12" height="9" fill="none" stroke="#fff" stroke-width="1.300"/><path d="M1569 452h6M1572 449v3" stroke="#fff"/>
<use href="#rc" x="1592" y="446"/>
<use href="#chv" x="1611" y="446"/><path d="M1628 442l8 8M1636 442l-8 8" stroke="#ccc" stroke-width="1.200"/>
<g fill="#aaa"><rect x="1655" y="444" width="1" height="1"/><rect x="1658" y="444" width="1" height="1"/><rect x="1661" y="444" width="1" height="1"/><rect x="1664" y="444" width="1" height="1"/><rect x="1655" y="447" width="1" height="1"/><rect x="1658" y="447" width="1" height="1"/><rect x="1661" y="447" width="1" height="1"/><rect x="1664" y="447" width="1" height="1"/></g>
<rect x="1435" y="467" width="32" height="18" rx="4" fill="#2a2a2a"/><use href="#mod" x="1447" y="476"/><use href="#chv" x="1459" y="476"/>
<rect x="1466" y="467" width="137" height="18" fill="#1c1c1c"/><text x="1473" y="480" class="w">GeoPipes</text>
<rect x="1604" y="467" width="59" height="18" rx="4" fill="#545454"/><path d="M1624 467v18M1644 467v18" stroke="#3d3d3d"/>
<path d="M1607.500 470q3 0 6-1.500q3 1.500 6 1.500v6q0 5-6 7.500q-6-2.500-6-7.500z" fill="none" stroke="#999"/>
<path d="M1630 470h6l3 3v8h-9zM1627 473v10h8" fill="none" stroke="#ddd" stroke-width="1.200"/>
<path d="M1650 472l7 7M1657 472l-7 7" stroke="#ddd" stroke-width="1.200"/>
<g fill="#404040"><rect x="1531" y="492" width="112" height="18" rx="3"/><rect x="1531" y="542" width="112" height="18" rx="3"/><rect x="1531" y="567" width="112" height="18" rx="3"/><rect x="1531" y="697" width="112" height="18" rx="3"/><rect x="1531" y="722" width="112" height="18" rx="3"/><rect x="1531" y="747" width="112" height="18" rx="3"/><rect x="1531" y="772" width="112" height="18" rx="3"/></g>
<g fill="#545454"><path d="M1550 492h90a3 3 0 0 1 3 3v12a3 3 0 0 1-3 3h-90z"/><path d="M1550 542h90a3 3 0 0 1 3 3v12a3 3 0 0 1-3 3h-90z"/><path d="M1550 567h90a3 3 0 0 1 3 3v12a3 3 0 0 1-3 3h-90z"/><path d="M1550 697h90a3 3 0 0 1 3 3v12a3 3 0 0 1-3 3h-90z"/><path d="M1550 722h90a3 3 0 0 1 3 3v12a3 3 0 0 1-3 3h-90z"/><path d="M1550 747h90a3 3 0 0 1 3 3v12a3 3 0 0 1-3 3h-90z"/><path d="M1550 772h90a3 3 0 0 1 3 3v12a3 3 0 0 1-3 3h-90z"/>
<rect x="1523" y="517" width="120" height="18" rx="3"/><rect x="1523" y="592" width="120" height="18" rx="3"/><rect x="1523" y="617" width="120" height="18" rx="3"/><rect x="1523" y="642" width="120" height="18" rx="3"/></g>
<rect x="1550" y="697" width="45" height="18" fill="#4772b3"/>
<use href="#tg" x="1540" y="501"/><use href="#tg" x="1540" y="551"/><use href="#tg" x="1540" y="576"/><use href="#tg" x="1540" y="706"/><use href="#tg" x="1540" y="731"/><use href="#tg" x="1540" y="756"/><use href="#tg" x="1540" y="781"/>
<text x="1520" y="505" class="e">Radius</text><text x="1512" y="530" class="e">Resolution</text><text x="1520" y="555" class="e">Bevel Radius</text><text x="1520" y="580" class="e">Bevel Segments</text><text x="1512" y="605" class="e">Rings Vertices</text><text x="1512" y="630" class="e">Rings Depth</text><text x="1512" y="655" class="e">Rings Radius</text><text x="1520" y="685" class="e">Extra Rings</text><text x="1520" y="710" class="e">Extra Rings Am...</text><text x="1520" y="735" class="e">Location Seed</text><text x="1520" y="760" class="e">Object Seed</text><text x="1520" y="785" class="e">Extra Rings Scale</text><text x="1520" y="815" class="e">Pipes Material</text><text x="1520" y="845" class="e">Rings Material</text>
<text x="1596" y="505" class="m w">0.1 m</text><text x="1583" y="530" class="m w">16</text><text x="1596" y="555" class="m w">0.2 m</text><text x="1596" y="580" class="m w">8</text><text x="1583" y="605" class="m w">6</text><text x="1583" y="630" class="m w">0.05 m</text><text x="1583" y="655" class="m w">1.5 m</text><text x="1596" y="710" class="m w">0.500</text><text x="1596" y="735" class="m w">0</text><text x="1596" y="760" class="m w">0</text><text x="1596" y="785" class="m w">0.100</text>
<g fill="#ddd"><circle cx="1654" cy="501" r="1.800"/><circle cx="1654" cy="526" r="1.800"/><circle cx="1654" cy="551" r="1.800"/><circle cx="1654" cy="576" r="1.800"/><circle cx="1654" cy="601" r="1.800"/><circle cx="1654" cy="626" r="1.800"/><circle cx="1654" cy="651" r="1.800"/><circle cx="1654" cy="706" r="1.800"/><circle cx="1654" cy="731" r="1.800"/><circle cx="1654" cy="756" r="1.800"/><circle cx="1654" cy="781" r="1.800"/></g>
<rect x="1531" y="672" width="132" height="18" rx="4" fill="#1c1c1c"/><use href="#coll" x="1542" y="681"/>
<rect x="1531" y="802" width="132" height="18" rx="4" fill="#1c1c1c"/><use href="#sph" x="1542" y="811"/><text x="1557" y="815" class="w">PaintedMetal0...</text><path d="M1648 807l8 8M1656 807l-8 8" stroke="#bbb"/>
<rect x="1531" y="832" width="132" height="18" rx="4" fill="#1c1c1c"/><use href="#sph" x="1542" y="841"/><text x="1557" y="845" class="w">MetalPlates01...</text><path d="M1648 837l8 8M1656 837l-8 8" stroke="#bbb"/>
<path d="M1451 868l4 4l-4 4" class="chev"/><text x="1463" y="876" class="j">出力属性</text>

<!-- timeline -->
<rect x="2" y="906" width="1384" height="71" rx="5" fill="#1e1e1e"/>
<path d="M2 931V911a5 5 0 0 1 5-5h1374a5 5 0 0 1 5 5v20z" fill="#303030"/>
<rect x="8" y="909" width="32" height="20" rx="4" fill="#2a2a2a"/><circle cx="20" cy="919" r="6.500" fill="#eee"/><path d="M20 919l4-5v10z" fill="#2a2a2a"/><path d="M15 915l4 4l-4 4" fill="#2a2a2a" opacity=".6"/><use href="#chv" x="34" y="919"/>
<rect x="46" y="909" width="125" height="20" rx="4" fill="#2a2a2a"/><path d="M91.500 909v20" stroke="#1c1c1c"/>
<text x="53" y="923" class="j">再生</text><use href="#chv" x="85" y="920"/><text x="99" y="923" class="j">キーイング</text><use href="#chv" x="165" y="920"/>
<text x="182" y="923" class="j">ビュー</text><text x="229" y="923" class="j">マーカー</text>
<rect x="601" y="909" width="40" height="20" rx="4" fill="#2a2a2a"/><path d="M605 909h15v20h-15a4 4 0 0 1-4-4v-12a4 4 0 0 1 4-4z" fill="#4e4e4e"/><circle cx="610.500" cy="919" r="3.500" fill="#eee"/><use href="#chv" x="631" y="919" opacity=".4"/>
<rect x="647" y="909" width="118" height="20" rx="4" fill="#4e4e4e"/>
<g fill="#eee"><path d="M651 914h1.500v10H651zM660 914l-7 5l7 5z"/><path d="M671 915l-4 4l4 4zM675 915l4 4l-4 4l-3.500-4zM683 915l-4 4l4 4z"/><path d="M701 912l-9 7l9 7z"/><path d="M711 912l9 7l-9 7z"/><path d="M727 915l-4 4l4 4zM733 915l4 4l-4 4l-4-4zM739 915l4 4l-4 4z"/><path d="M750 914l7 5l-7 5zM757.500 914h1.500v10h-1.500z"/></g>
<rect x="1107" y="909" width="73" height="20" rx="4" fill="#545454"/><text x="1143" y="923" class="m w">1</text>
<circle cx="1196" cy="920" r="6" fill="none" stroke="#ddd" stroke-width="1.200"/><path d="M1196 920v-4M1193 912h6" stroke="#ddd" stroke-width="1.200"/>
<rect x="1206" y="909" width="173" height="20" rx="4" fill="#545454"/><path d="M1293 909v20" stroke="#3a3a3a"/>
<text x="1221" y="923" class="j w">開始</text><text x="1275" y="923" class="m w">1</text><text x="1308" y="923" class="j w">終了</text><text x="1345" y="923" class="w">250</text>
<rect x="10" y="954" width="1368" height="11" fill="url(#tk)"/>
<text x="96.400" y="947" class="m">10</text><text x="149" y="947" class="m">20</text><text x="201" y="947" class="m">30</text><text x="252" y="947" class="m">40</text><text x="304" y="947" class="m">50</text><text x="355" y="947" class="m">60</text><text x="407" y="947" class="m">70</text><text x="458" y="947" class="m">80</text><text x="510" y="947" class="m">90</text><text x="561" y="947" class="m">100</text><text x="613" y="947" class="m">110</text><text x="665" y="947" class="m">120</text><text x="716" y="947" class="m">130</text><text x="768" y="947" class="m">140</text><text x="819.500" y="947" class="m">150</text><text x="870" y="947" class="m">160</text><text x="922" y="947" class="m">170</text><text x="974" y="947" class="m">180</text><text x="1025" y="947" class="m">190</text><text x="1077" y="947" class="m">200</text><text x="1128" y="947" class="m">210</text><text x="1180" y="947" class="m">220</text><text x="1231" y="947" class="m">230</text><text x="1283" y="947" class="m">240</text><text x="1334" y="947" class="m">250</text>
<path d="M1334.500 954v23" stroke="#111" opacity=".7"/>
<rect x="8" y="965" width="1371" height="10" rx="5" fill="#545454"/><circle cx="13" cy="970" r="3" fill="#2a2a2a"/><circle cx="1374" cy="970" r="3" fill="#2a2a2a"/>
<path d="M51.500 951v26" stroke="#4772b3"/>
<rect x="40" y="934" width="23" height="17" rx="3" fill="#4772b3"/><text x="51.500" y="947" class="m w">1</text>
<path d="M2 950l4 4l-4 4" class="chev" opacity=".7"/><path d="M1383 950l-4 4l4 4" class="chev" opacity=".7"/>

<!-- status bar -->
<use href="#mouse" x="17" y="987"/><text x="34" y="991" class="d j">選択</text>
<use href="#mouse" x="72" y="987"/><path d="M78 981v5M81 982v3" stroke="#b8b8b8"/><text x="91" y="991" class="d j">ボックス選択</text>
<use href="#mouse" x="229" y="987"/><text x="246" y="991" class="d j">ビューを回転</text>
<use href="#mouse" x="439" y="987"/><text x="456" y="991" class="d j">メニュー呼び出し</text>
<text x="1093" y="991" class="d" textLength="577" lengthAdjust="spacingAndGlyphs">GeoPipes | 頂点:1/12 | 辺:0/11 | 面:0/0 | 三角面:0 | オブジェクト:1/4 | メモリ: 72.3 MiB | VRAM: 1.0/12.0 GiB | 3.1.2</text>
</svg>
</body></html>
